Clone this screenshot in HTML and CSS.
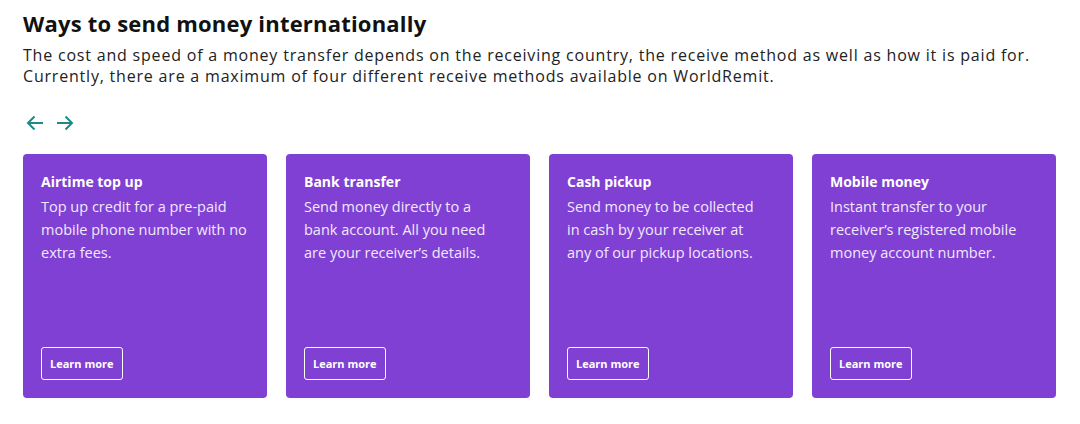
FILE: index.html
```html
<!DOCTYPE html>
<html lang="en">
<head>
<meta charset="utf-8">
<link rel="stylesheet" href="styles.css">
<title>Ways to send money internationally</title>
</head>
<body>
<section class="methods">
  <h2 class="title">Ways to send money internationally</h2>
  <p class="intro">The cost and speed of a money transfer depends on the receiving country, the receive method as well as how it is paid for.<br>Currently, there are a maximum of four different receive methods available on WorldRemit.</p>
  <div class="nav">
    <button class="arrow" aria-label="Previous">
      <svg width="18" height="16" viewBox="0 0 18 16"><path d="M17 8H2M8.5 1.5L2 8l6.5 6.5" fill="none" stroke="currentColor" stroke-width="2"/></svg>
    </button>
    <button class="arrow" aria-label="Next">
      <svg width="18" height="16" viewBox="0 0 18 16"><path d="M1 8h15M9.5 1.5L16 8l-6.5 6.5" fill="none" stroke="currentColor" stroke-width="2"/></svg>
    </button>
  </div>
  <div class="cards">
    <div class="card">
      <h3 class="card-title">Airtime top up</h3>
      <p class="card-text">Top up credit for a pre-paid<br>mobile phone number with no<br>extra fees.</p>
      <a class="btn" href="#">Learn more</a>
    </div>
    <div class="card">
      <h3 class="card-title">Bank transfer</h3>
      <p class="card-text">Send money directly to a<br>bank account. All you need<br>are your receiver’s details.</p>
      <a class="btn" href="#">Learn more</a>
    </div>
    <div class="card">
      <h3 class="card-title">Cash pickup</h3>
      <p class="card-text">Send money to be collected<br>in cash by your receiver at<br>any of our pickup locations.</p>
      <a class="btn" href="#">Learn more</a>
    </div>
    <div class="card">
      <h3 class="card-title">Mobile money</h3>
      <p class="card-text">Instant transfer to your<br>receiver’s registered mobile<br>money account number.</p>
      <a class="btn" href="#">Learn more</a>
    </div>
  </div>
</section>
</body>
</html>
```
FILE: styles.css
```css
* { box-sizing: border-box; }
body {
  margin: 0;
  background: #fff;
  font-family: "Open Sans", "Liberation Sans", sans-serif;
  color: #1a1a1a;
}
.methods {
  padding: 8px 23px 0 23px;
}
.title {
  margin: 0;
  font-size: 22px;
  line-height: 30px;
  font-weight: 700;
  letter-spacing: 0.2px;
  color: #111;
}
.intro {
  margin: 7px 0 0 0;
  font-size: 16px;
  line-height: 21px;
  letter-spacing: 0.8px;
  color: #222;
  white-space: nowrap;
}
.nav {
  display: flex;
  gap: 9px;
  margin-top: 26px;
  height: 20px;
  align-items: center;
}
.arrow {
  border: 0;
  background: none;
  padding: 0;
  margin-left: 3px;
  color: #1d8a86;
  display: flex;
  cursor: pointer;
}
.cards {
  display: flex;
  gap: 19px;
  margin-top: 21px;
}
.card {
  width: 244px;
  height: 244px;
  background: #8040d4;
  border-radius: 4px;
  padding: 19px 18px 18px 18px;
  display: flex;
  flex-direction: column;
  align-items: flex-start;
  color: #fff;
}
.card-title {
  margin: 0;
  font-size: 14px;
  line-height: 18px;
  font-weight: 700;
}
.card-text {
  margin: 4px 0 0 0;
  font-size: 14.5px;
  line-height: 23px;
  color: #f1e9fb;
  white-space: nowrap;
}
.btn {
  margin-top: auto;
  border: 1.5px solid #fff;
  border-radius: 3px;
  padding: 0 8px;
  height: 33px;
  display: flex;
  align-items: center;
  font-size: 11px;
  font-weight: 700;
  color: #fff;
  text-decoration: none;
}
```
